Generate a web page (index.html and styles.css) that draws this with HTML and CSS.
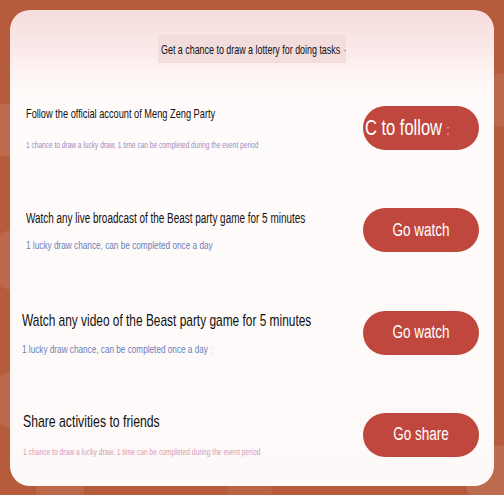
FILE: index.html
```html
<!DOCTYPE html>
<html lang="en">
<head>
  <meta charset="UTF-8" />
  <meta name="viewport" content="width=device-width, initial-scale=1.0"/>
  <title>Lottery Tasks</title>
  <link rel="stylesheet" href="styles.css">
</head>
<body>
  <div class="card">
    <div class="header">
      <h2 class="title"><span class="narrow">Get a chance to draw a lottery for doing tasks <span class="dot">·</span></span></h2>
    </div>

    <div class="task task-1">
      <div class="info">
        <div class="name narrow">Follow the official account of Meng Zeng Party</div>
        <div class="desc narrow">1 chance to draw a lucky draw, 1 time can be completed during the event period</div>
      </div>
      <button class="btn btn-follow"><span class="label">C to follow <span class="dot">:</span></span></button>
    </div>

    <div class="task task-2">
      <div class="info">
        <div class="name narrow">Watch any live broadcast of the Beast party game for 5 minutes</div>
        <div class="desc narrow">1 lucky draw chance, can be completed once a day</div>
      </div>
      <button class="btn"><span class="label">Go watch</span></button>
    </div>

    <div class="task task-3">
      <div class="info">
        <div class="name narrow">Watch any video of the Beast party game for 5 minutes</div>
        <div class="desc narrow">1 lucky draw chance, can be completed once a day <span class="dot">:</span></div>
      </div>
      <button class="btn"><span class="label">Go watch</span></button>
    </div>

    <div class="task task-4">
      <div class="info">
        <div class="name narrow">Share activities to friends</div>
        <div class="desc narrow">1 chance to draw a lucky draw, 1 time can be completed during the event period</div>
      </div>
      <button class="btn"><span class="label">Go share</span></button>
    </div>
  </div>
</body>
</html>
```

FILE: styles.css
```css
body {
  margin: 0;
  padding: 10px;
  font-family: 'Liberation Sans', Arial, sans-serif;
  background-color: #b65b3b;
  background-image:
    radial-gradient(circle at 8px 130px, rgba(255, 255, 255, 0.09) 0 26px, transparent 27px),
    radial-gradient(circle at 16px 260px, rgba(255, 255, 255, 0.08) 0 30px, transparent 31px),
    radial-gradient(circle at 16px 400px, rgba(255, 255, 255, 0.08) 0 28px, transparent 29px),
    radial-gradient(circle at 500px 100px, rgba(255, 255, 255, 0.08) 0 26px, transparent 27px),
    radial-gradient(circle at 500px 480px, rgba(255, 255, 255, 0.1) 0 34px, transparent 35px),
    radial-gradient(circle at 60px 495px, rgba(255, 255, 255, 0.08) 0 24px, transparent 25px),
    radial-gradient(circle at 250px 495px, rgba(255, 255, 255, 0.06) 0 22px, transparent 23px);
  height: 495px;
  box-sizing: border-box;
  overflow: hidden;
}

/* the source font is a condensed sans, squeeze Liberation Sans to match */
.narrow {
  --squeeze: 0.72;
  display: block;
  white-space: nowrap;
  transform: scaleX(var(--squeeze));
  transform-origin: left center;
}

.card {
  width: 484px;
  height: 476px;
  border-radius: 20px;
  background: linear-gradient(to bottom, #f6dcdc 0, #fbeceb 45px, #fef8f7 75px, #fffbfa 95px, #fdf9f8 100%);
  display: flex;
  flex-direction: column;
  overflow: hidden;
}

.header {
  height: 67px;
  display: flex;
  justify-content: center;
  padding-top: 25px;
  box-sizing: border-box;
}

.title {
  margin: 0;
  width: 188px;
  height: 28px;
  padding-left: 3px;
  box-sizing: border-box;
  display: flex;
  align-items: center;
  background: #f3dcdc;
  color: #111;
  font-size: 13px;
  font-weight: normal;
}

.title .narrow {
  --squeeze: 0.685;
}

.title .dot {
  margin-left: 2px;
  font-size: 10px;
}

.task {
  flex: 1;
  display: flex;
  align-items: center;
  padding: 0 15px 0 16px;
}

.info {
  flex: 1;
  min-width: 0;
  display: flex;
  flex-direction: column;
}

.name {
  color: #111;
}

.task-1 .name { --squeeze: 0.71; font-size: 13px; }
.task-1 .desc { --squeeze: 0.685; font-size: 9.6px; color: #9b8ac2; margin-top: 18px; }

.task-2 .name { --squeeze: 0.71; font-size: 14px; }
.task-2 .desc { --squeeze: 0.71; font-size: 11.6px; color: #6a7fb8; margin-top: 12px; }

.task-3 .info { margin-left: -4px; }
.task-3 .name { --squeeze: 0.7; font-size: 17px; }
.task-3 .desc { --squeeze: 0.745; font-size: 11px; color: #6a7fb8; margin-top: 12px; }

.task-4 .info { margin-left: -3px; }
.task-4 .name { font-size: 17px; }
.task-4 .desc { --squeeze: 0.7; font-size: 9.6px; color: #d79bb0; margin-top: 14px; }

.desc .dot {
  color: #c8cfe2;
}

.btn {
  flex-shrink: 0;
  width: 116px;
  height: 44px;
  padding: 0;
  border: none;
  border-radius: 22px;
  background: #bf473d;
  color: #fff;
  font-family: inherit;
  font-size: 18px;
  cursor: pointer;
}

.btn .label {
  display: inline-block;
  white-space: nowrap;
  transform: scaleX(0.75);
}

.btn-follow {
  text-align: left;
  padding-left: 2px;
  font-size: 22px;
}

.btn-follow .label {
  transform-origin: left center;
}

.btn-follow .dot {
  font-size: 14px;
  color: #f2c7c0;
}
```
